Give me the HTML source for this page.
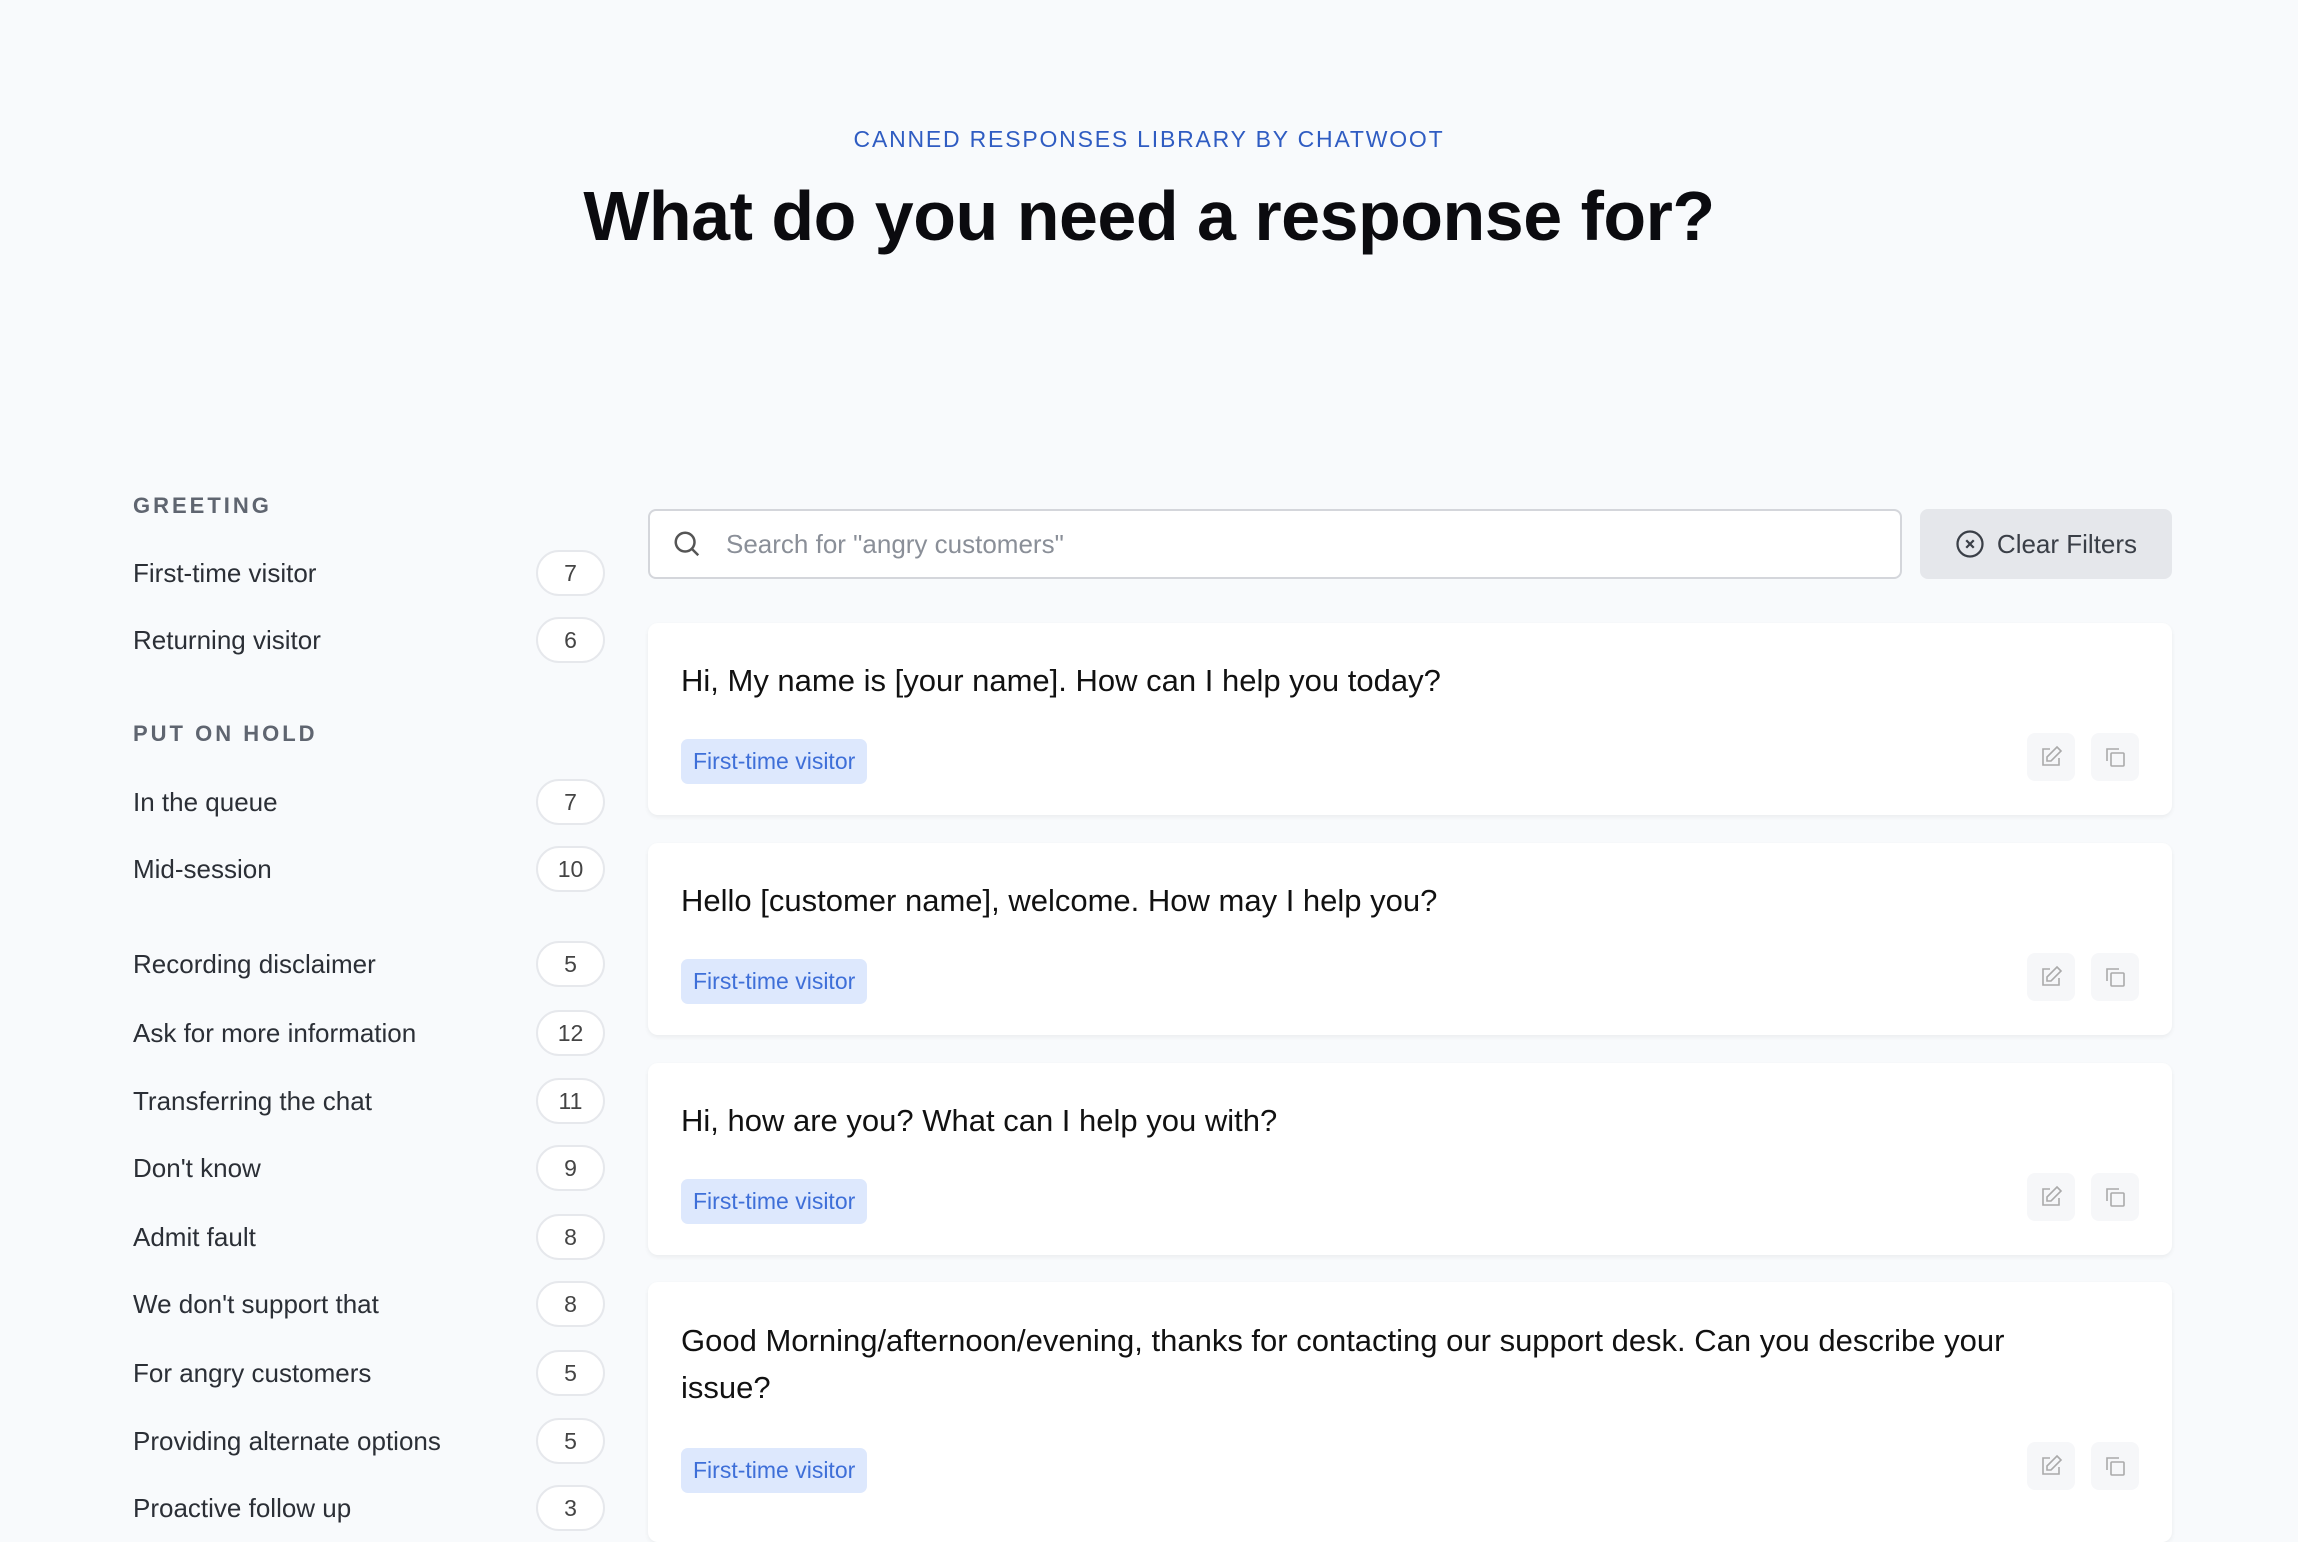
<!DOCTYPE html>
<html><head><meta charset="utf-8"><style>
*{box-sizing:border-box;margin:0;padding:0}
body{width:2298px;height:1520px;overflow:hidden;background:#f8fafc;font-family:"Liberation Sans",sans-serif;color:#1f2937;position:relative}
.kick{position:absolute;top:126px;left:0;width:100%;text-align:center;font-size:23px;letter-spacing:1.8px;color:#2f5cc2}
h1{position:absolute;top:176px;left:0;width:100%;text-align:center;font-size:70px;font-weight:600;color:#0b0b0f;letter-spacing:-0.5px}
.cat{position:absolute;left:133px;font-size:22px;font-weight:bold;letter-spacing:3px;color:#5f6570}
.it{position:absolute;left:133px;width:472px;height:48px;display:flex;align-items:center;justify-content:space-between;font-size:26px;color:#2b2f36}
.b{width:69px;height:46px;border:2px solid #e6e8ec;border-radius:24px;background:#fff;display:flex;align-items:center;justify-content:center;font-size:23px;color:#444}
.search{position:absolute;left:648px;top:509px;width:1254px;height:70px;background:#fff;border:2px solid #d4d6db;border-radius:8px;display:flex;align-items:center;padding-left:22px;font-size:26px;color:#8a8f98}
.clear{position:absolute;left:1920px;top:509px;width:252px;height:70px;background:#e5e7eb;border-radius:8px;display:flex;align-items:center;justify-content:center;gap:12px;font-size:26px;color:#3a3f47}
.card{position:absolute;left:648px;width:1524px;background:#fff;border-radius:10px;box-shadow:0 2px 5px rgba(0,0,0,0.06)}
.card p{position:absolute;left:33px;font-size:31px;color:#111;line-height:47px}
.tag{position:absolute;left:33px;height:45px;padding:0 12px;background:#dde8fd;border-radius:7px;font-size:23px;color:#3e6fd8;display:flex;align-items:center}
.ic{position:absolute;width:48px;height:48px;border-radius:8px;background:#f6f7f9;display:flex;align-items:center;justify-content:center}
</style></head><body>
<div class="kick">CANNED RESPONSES LIBRARY BY CHATWOOT</div>
<h1>What do you need a response for?</h1>

<div class="cat" style="top:493px">GREETING</div>
<div class="it" style="top:549px"><span>First-time visitor</span><span class="b">7</span></div>
<div class="it" style="top:616px"><span>Returning visitor</span><span class="b">6</span></div>
<div class="cat" style="top:721px">PUT ON HOLD</div>
<div class="it" style="top:778px"><span>In the queue</span><span class="b">7</span></div>
<div class="it" style="top:845px"><span>Mid-session</span><span class="b">10</span></div>
<div class="it" style="top:940px"><span>Recording disclaimer</span><span class="b">5</span></div>
<div class="it" style="top:1009px"><span>Ask for more information</span><span class="b">12</span></div>
<div class="it" style="top:1077px"><span>Transferring the chat</span><span class="b">11</span></div>
<div class="it" style="top:1144px"><span>Don't know</span><span class="b">9</span></div>
<div class="it" style="top:1213px"><span>Admit fault</span><span class="b">8</span></div>
<div class="it" style="top:1280px"><span>We don't support that</span><span class="b">8</span></div>
<div class="it" style="top:1349px"><span>For angry customers</span><span class="b">5</span></div>
<div class="it" style="top:1417px"><span>Providing alternate options</span><span class="b">5</span></div>
<div class="it" style="top:1484px"><span>Proactive follow up</span><span class="b">3</span></div>

<div class="search"><svg width="30" height="30" viewBox="0 0 24 24" fill="none" stroke="#555" stroke-width="2"><circle cx="10.5" cy="10.5" r="7.5"/><path d="M16 16l5 5"/></svg><span style="margin-left:24px">Search for "angry customers"</span></div>
<div class="clear"><svg width="30" height="30" viewBox="0 0 24 24" fill="none" stroke="#3a3f47" stroke-width="1.8"><circle cx="12" cy="12" r="10"/><path d="M9 9l6 6M15 9l-6 6"/></svg><span>Clear Filters</span></div>

<div class="card" style="top:623px;height:192px"><p style="top:34px">Hi, My name is [your name]. How can I help you today?</p><div class="tag" style="top:116px">First-time visitor</div>
<div class="ic" style="left:1379px;top:110px"><svg width="24" height="24" viewBox="0 0 24 24" fill="none" stroke="#aaa" stroke-width="1.6"><path d="M11 4H4v16h16v-7"/><path d="M18 2l4 4-10 10H8v-4z"/></svg></div>
<div class="ic" style="left:1443px;top:110px"><svg width="24" height="24" viewBox="0 0 24 24" fill="none" stroke="#aaa" stroke-width="1.6"><rect x="8" y="8" width="13" height="13" rx="1"/><path d="M4 16V4h12"/></svg></div></div>

<div class="card" style="top:843px;height:192px"><p style="top:34px">Hello [customer name], welcome. How may I help you?</p><div class="tag" style="top:116px">First-time visitor</div>
<div class="ic" style="left:1379px;top:110px"><svg width="24" height="24" viewBox="0 0 24 24" fill="none" stroke="#aaa" stroke-width="1.6"><path d="M11 4H4v16h16v-7"/><path d="M18 2l4 4-10 10H8v-4z"/></svg></div>
<div class="ic" style="left:1443px;top:110px"><svg width="24" height="24" viewBox="0 0 24 24" fill="none" stroke="#aaa" stroke-width="1.6"><rect x="8" y="8" width="13" height="13" rx="1"/><path d="M4 16V4h12"/></svg></div></div>

<div class="card" style="top:1063px;height:192px"><p style="top:34px">Hi, how are you? What can I help you with?</p><div class="tag" style="top:116px">First-time visitor</div>
<div class="ic" style="left:1379px;top:110px"><svg width="24" height="24" viewBox="0 0 24 24" fill="none" stroke="#aaa" stroke-width="1.6"><path d="M11 4H4v16h16v-7"/><path d="M18 2l4 4-10 10H8v-4z"/></svg></div>
<div class="ic" style="left:1443px;top:110px"><svg width="24" height="24" viewBox="0 0 24 24" fill="none" stroke="#aaa" stroke-width="1.6"><rect x="8" y="8" width="13" height="13" rx="1"/><path d="M4 16V4h12"/></svg></div></div>

<div class="card" style="top:1282px;height:260px"><p style="top:35px">Good Morning/afternoon/evening, thanks for contacting our support desk. Can you describe your<br>issue?</p><div class="tag" style="top:166px">First-time visitor</div>
<div class="ic" style="left:1379px;top:160px"><svg width="24" height="24" viewBox="0 0 24 24" fill="none" stroke="#aaa" stroke-width="1.6"><path d="M11 4H4v16h16v-7"/><path d="M18 2l4 4-10 10H8v-4z"/></svg></div>
<div class="ic" style="left:1443px;top:160px"><svg width="24" height="24" viewBox="0 0 24 24" fill="none" stroke="#aaa" stroke-width="1.6"><rect x="8" y="8" width="13" height="13" rx="1"/><path d="M4 16V4h12"/></svg></div></div>
</body></html>
